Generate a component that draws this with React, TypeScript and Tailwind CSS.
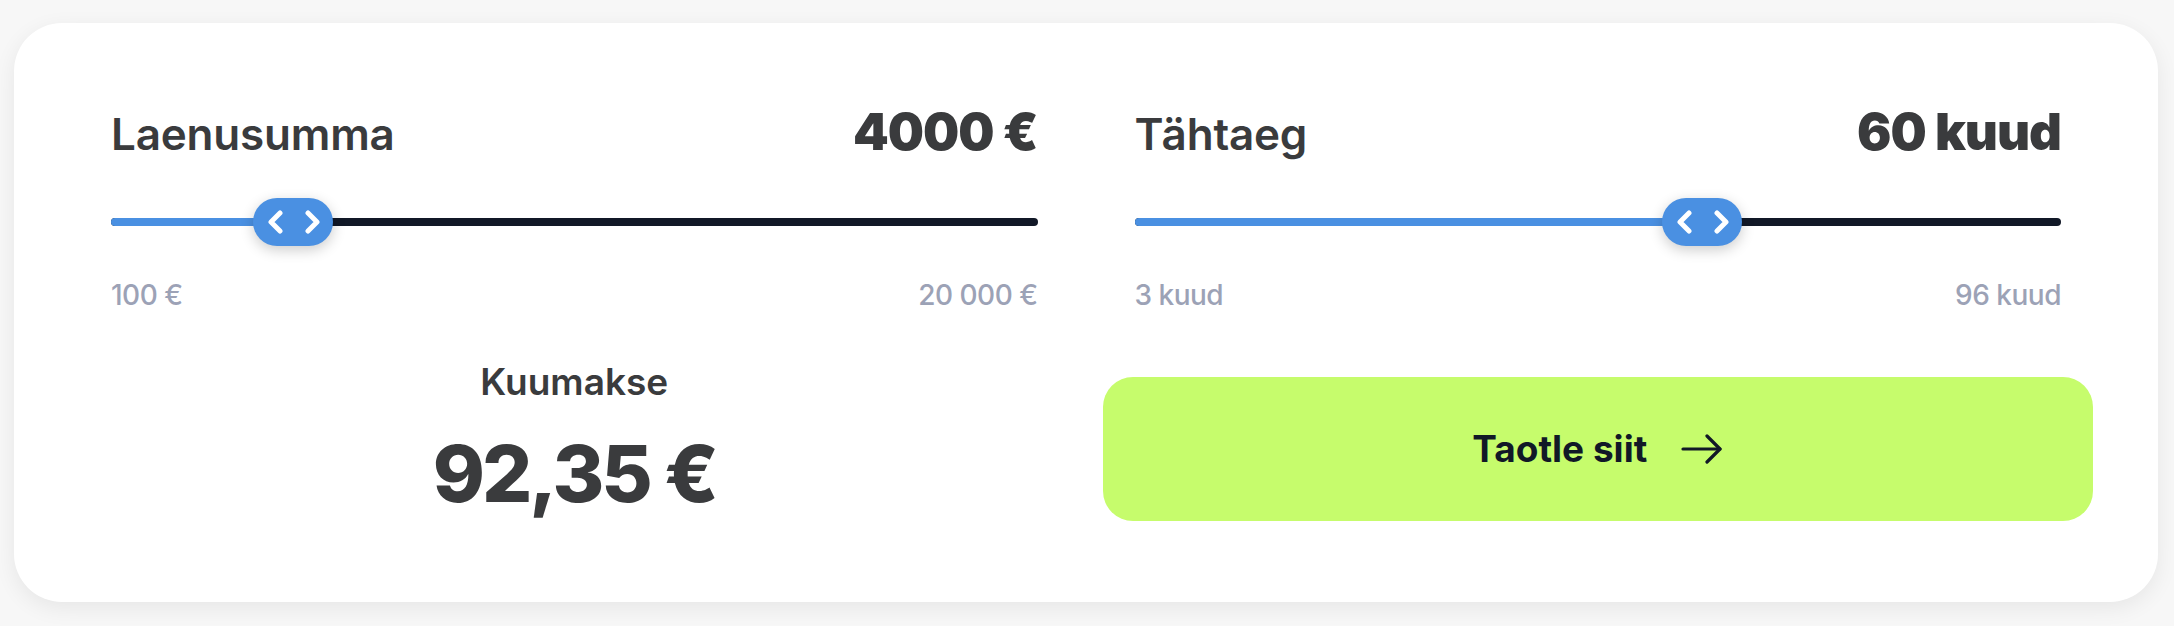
import { useState } from "react";

const formatNumber = (n: number) => n.toString().replace(/\B(?=(\d{3})+(?!\d))/g, " ");

interface RangeSliderProps {
  label: string;
  value: number;
  min: number;
  max: number;
  step: number;
  unit: string;
  onChange: (v: number) => void;
}

function RangeSlider({ label, value, min, max, step, unit, onChange }: RangeSliderProps) {
  const pct = ((value - min) / (max - min)) * 100;

  return (
    <div className="flex flex-col">
      {/* Header */}
      <div className="flex items-baseline justify-between">
        <span className="text-[44px] leading-[48px] font-semibold text-[#3a3b3d] tracking-[-0.2px]">{label}</span>
        <span className="text-[51px] leading-[48px] font-black text-[#3a3b3d] tracking-[-1px]">
          {value} {unit}
        </span>
      </div>

      {/* Track */}
      <div className="relative mt-[40px] flex h-[48px] items-center">
        <div className="flex h-[8px] w-full overflow-hidden rounded-full bg-[#111827]">
          <div className="h-full bg-[#4a90e2]" style={{ width: `${pct}%` }} />
        </div>
        <div
          className="pointer-events-none absolute top-0 flex h-[48px] w-[80px] -translate-x-1/2 items-center justify-center rounded-full bg-[#4a90e2] shadow-[0_4px_14px_rgba(0,0,0,0.2)]"
          style={{ left: `${pct}%` }}
        >
          <svg width="56" height="24" viewBox="0 0 56 24" fill="none" stroke="white" strokeWidth="5" strokeLinecap="round" strokeLinejoin="round">
            <path d="M15 3 L6 12 L15 21" />
            <path d="M43 3 L52 12 L43 21" />
          </svg>
        </div>
        <input
          type="range"
          min={min}
          max={max}
          step={step}
          value={value}
          onChange={(e) => onChange(Number(e.target.value))}
          className="absolute inset-0 h-full w-full cursor-pointer opacity-0"
        />
      </div>

      {/* Min / max */}
      <div className="mt-[35px] flex justify-between text-[28px] leading-[28px] font-medium text-[#9ca2b6] tracking-[-0.5px]">
        <span>
          {formatNumber(min)} {unit}
        </span>
        <span>
          {formatNumber(max)} {unit}
        </span>
      </div>
    </div>
  );
}

export default function App() {
  const [amount, setAmount] = useState(4000);
  const [months, setMonths] = useState(60);

  const rate = 0.011376;
  const payment = (amount * rate) / (1 - Math.pow(1 + rate, -months));

  return (
    <div className="min-h-[626px] w-full bg-[#f7f7f7] pl-[14px] pr-[16px] pt-[23px] pb-[24px] font-[Inter,sans-serif]">
      <div className="h-[579px] rounded-[48px] bg-white px-[97px] pt-[85px] shadow-[0_6px_22px_rgba(0,0,0,0.07)]">
        <div className="grid grid-cols-2 gap-x-[97px]">
          <RangeSlider label="Laenusumma" value={amount} min={100} max={20000} step={100} unit="€" onChange={setAmount} />
          <RangeSlider label="Tähtaeg" value={months} min={3} max={96} step={1} unit="kuud" onChange={setMonths} />

          {/* Monthly payment */}
          <div className="mt-[54px] flex flex-col items-center">
            <p className="text-[37px] leading-[37px] font-semibold text-[#3a3b3d]">Kuumakse</p>
            <p className="mt-[33px] text-[79px] leading-[81px] font-extrabold text-[#3a3b3d] tracking-[-3px]">
              {payment.toFixed(2).replace(".", ",")} €
            </p>
          </div>

          {/* Apply */}
          <div className="mt-[68px] -mx-[32px]">
            <button className="flex h-[144px] w-full items-center justify-center gap-[34px] rounded-[30px] bg-[#c6fc6c] text-[37px] font-bold text-[#111827]">
              <span>Taotle siit</span>
              <svg width="42" height="30" viewBox="0 0 42 30" fill="none" stroke="#111827" strokeWidth="3.2" strokeLinecap="round" strokeLinejoin="round">
                <path d="M2 15 H39" />
                <path d="M26 2 L39 15 L26 28" />
              </svg>
            </button>
          </div>
        </div>
      </div>
    </div>
  );
}
